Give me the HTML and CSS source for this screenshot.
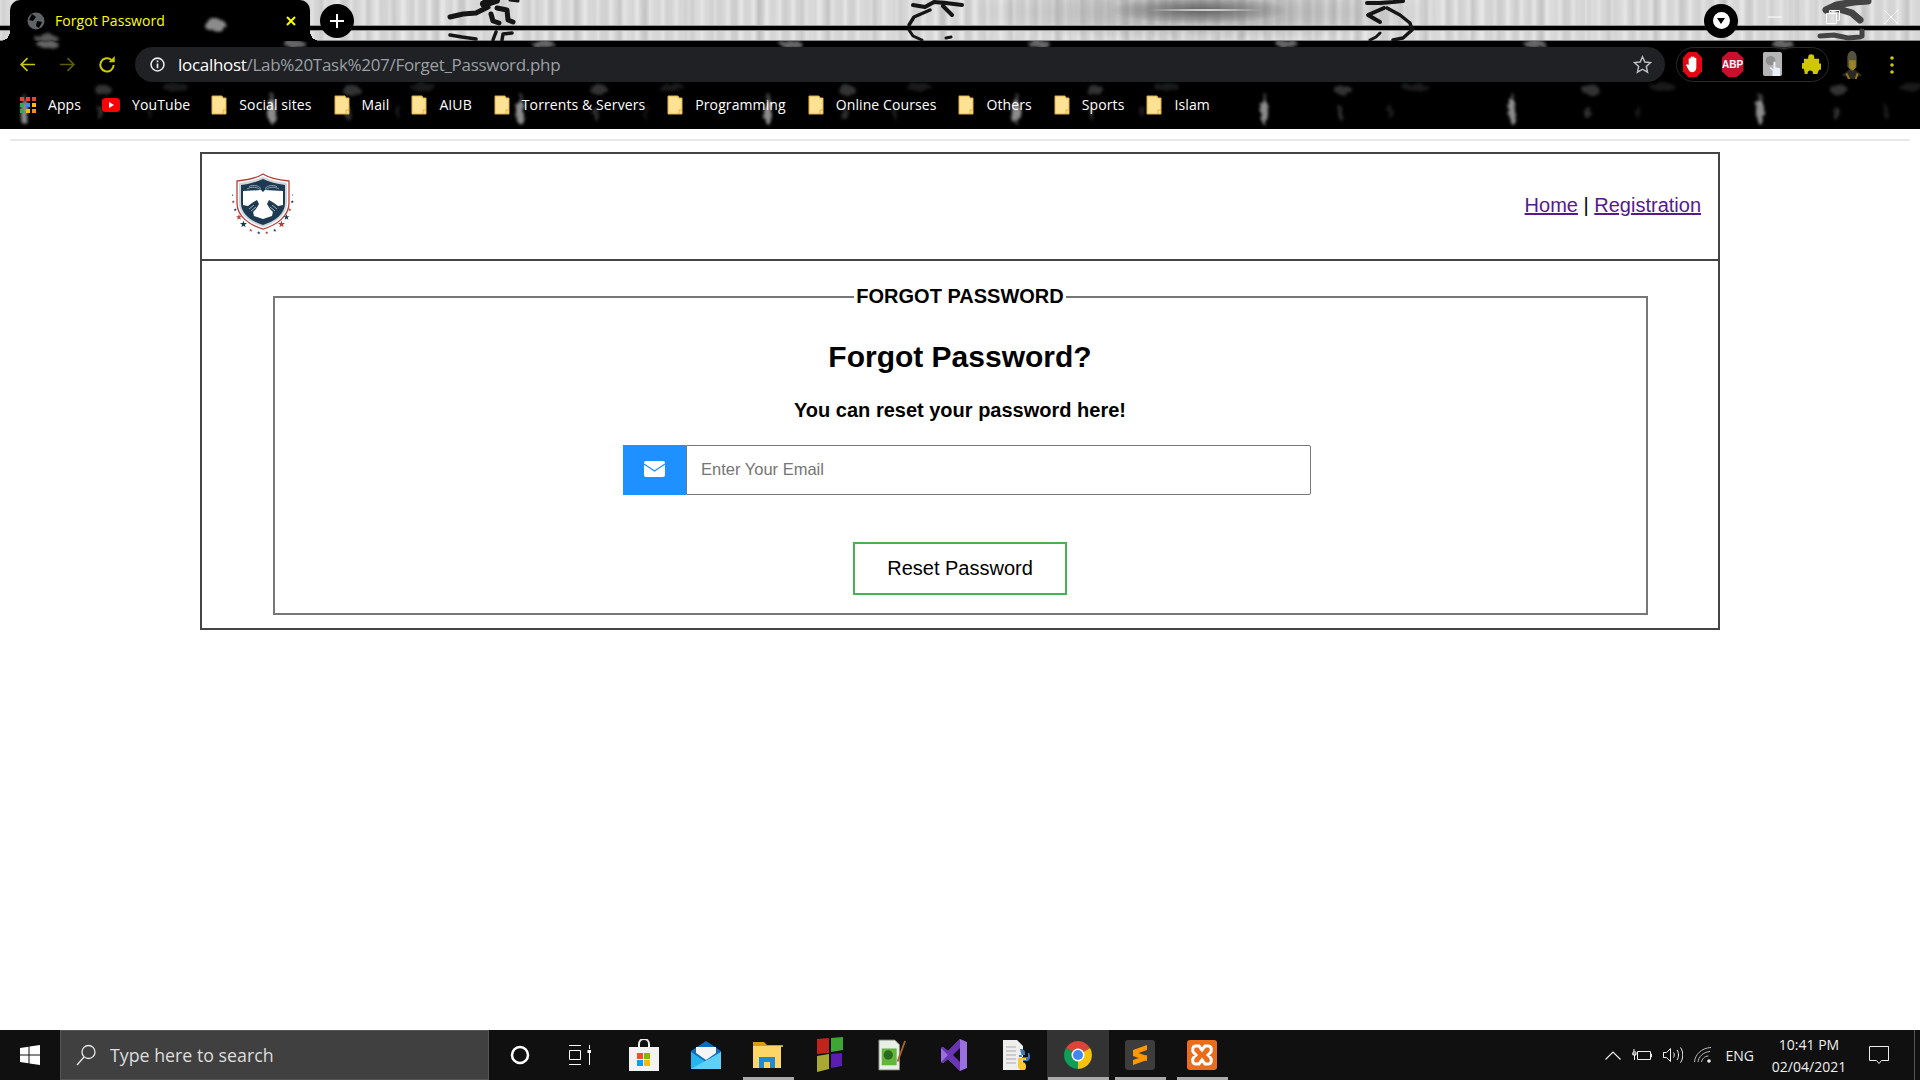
FILE: index.html
```html
<!DOCTYPE html>
<html lang="en">
<head>
    <meta charset="UTF-8">
    <meta name="viewport" content="width=device-width, initial-scale=1.0">
    <title>Forgot Password</title>
    <link rel="stylesheet" href="styles.css">
</head>
<body>
    <svg class="defs" aria-hidden="true">
        <defs>
            <filter id="wisp" x="-20%" y="-20%" width="140%" height="140%">
                <feTurbulence type="fractalNoise" baseFrequency="0.12" numOctaves="2" seed="4"/>
                <feDisplacementMap in="SourceGraphic" scale="7"/>
                <feGaussianBlur stdDeviation="1.600"/>
            </filter>
            <pattern id="smoke-tile" width="248" height="129" patternUnits="userSpaceOnUse">
                <g fill="#fff">
                    <ellipse cx="24" cy="112" rx="4" ry="12" opacity=".55"/>
                    <ellipse cx="24" cy="98" rx="2" ry="5" opacity=".25"/>
                    <ellipse cx="47" cy="44" rx="11" ry="4" opacity=".4"/>
                    <ellipse cx="103" cy="90" rx="9" ry="5" opacity=".2"/>
                    <ellipse cx="100" cy="113" rx="3" ry="7" opacity=".18"/>
                    <ellipse cx="175" cy="87" rx="13" ry="4" opacity=".1"/>
                    <ellipse cx="150" cy="112" rx="2" ry="7" opacity=".1"/>
                </g>
            </pattern>
        </defs>
        <symbol id="folder" viewBox="0 0 16 20">
            <path d="M1 1h10l1 2h3v16H1z" fill="#fde293" stroke="#e0b040"/>
            <path d="M12 19v-4h3" fill="none" stroke="#e0b040"/>
        </symbol>
        <symbol id="star" viewBox="0 0 10 10">
            <polygon points="5,0 6.2,3.6 10,3.6 7,5.9 8.1,9.6 5,7.4 1.9,9.6 3,5.9 0,3.6 3.8,3.6"/>
        </symbol>
    </svg>

    <!-- browser window -->
    <header class="chrome">
        <svg class="smoke" viewBox="0 0 1920 129" aria-hidden="true">
            <rect x="-20" y="0" width="1960" height="129" fill="url(#smoke-tile)" filter="url(#wisp)"/>
        </svg>
        <div class="tabstrip">
            <!-- theme picture behind the tabs -->
            <svg class="theme-art" viewBox="0 0 1920 41" aria-hidden="true">
                <g fill="none" stroke="#151515" stroke-linecap="round" stroke-linejoin="round">
                    <path d="M450 17l13-3 13-1 12-6" stroke-width="5"/>
                    <path d="M484 4l12-4" stroke-width="8"/>
                    <path d="M497 8l10 2 1 10 5 2M491 14l2 7 6 2" stroke-width="5"/>
                    <path d="M510 0l8 1" stroke-width="3"/>
                    <path d="M450 35l12 2 14 2M496 32l-3 8M512 33l-9 1-1 6" stroke-width="3.500"/>

                    <path d="M913 5l12 2 9-5 12 1 16 2M943 6l9 9" stroke-width="4"/>
                    <path d="M930 10l-16 7-5 8" stroke-width="3.500"/>
                    <path d="M909 30l4 6 9 4M946 38l5-1" stroke-width="3"/>

                    <path d="M1367 3h13l13-1 10-1" stroke-width="4"/>
                    <path d="M1384 8l-16 7 12 7" stroke-width="4"/>
                    <path d="M1387 8l13 7 10 8 2 7-9 8-10 2" stroke-width="3.500"/>
                    <path d="M1380 33l-4 4-6 3" stroke-width="3"/>
                </g>
                <g fill="none" stroke="#444" stroke-linecap="round" stroke-width="7">
                    <path d="M1826 10l10-5 18-3 14-1M1836 8l16 5 8 7"/>
                    <path d="M1820 36l14-1 14 3 12-1M1862 31v5" stroke-width="5"/>
                </g>
            </svg>
            <div class="tab">
                <svg class="tab-smoke" viewBox="0 0 300 41" aria-hidden="true">
                    <g fill="#fff" filter="url(#wisp)">
                        <ellipse cx="205" cy="25" rx="11" ry="6" opacity=".55"/>
                        <ellipse cx="36" cy="38" rx="12" ry="4" opacity=".35"/>
                    </g>
                </svg>
                <svg class="tab-globe" viewBox="0 0 18 18">
                    <circle cx="9" cy="9" r="8.500" fill="#5f6368"/>
                    <path d="M5 2l4 3-3 4-4-1zM10 9l5 1-3 6-3-2z" fill="#000"/>
                </svg>
                <span class="tab-title">Forgot Password</span>
                <svg class="tab-close" viewBox="0 0 10 10">
                    <path d="M1 1l8 8M9 1l-8 8" stroke="#ffff00" stroke-width="2"/>
                </svg>
            </div>
            <div class="new-tab">
                <svg viewBox="0 0 14 14" width="14" height="14">
                    <path d="M7 0v14M0 7h14" stroke="#fff" stroke-width="2"/>
                </svg>
            </div>
            <div class="tab-search">
                <div class="tab-search-dot">
                    <svg viewBox="0 0 8 6" width="8" height="6"><path d="M0 0h8L4 6z" fill="#000"/></svg>
                </div>
            </div>
            <div class="win-btn">
                <svg viewBox="0 0 14 2" width="14" height="2"><path d="M0 1h14" stroke="#fff"/></svg>
            </div>
            <div class="win-btn">
                <svg viewBox="0 0 14 14" width="14" height="14"><path d="M.5 3.500h10v10H.5zM3.500 3.500v-3h10v10h-3" fill="none" stroke="#fff"/></svg>
            </div>
            <div class="win-btn">
                <svg viewBox="0 0 14 14" width="14" height="14"><path d="M0 0l14 14M14 0L0 14" stroke="#fff"/></svg>
            </div>
        </div>

        <div class="toolbar">
            <div class="nav-btn">
                <svg viewBox="0 0 16 16" width="17" height="17"><path d="M15 8H2M8 2L2 8l6 6" fill="none" stroke="#c9c900" stroke-width="1.600"/></svg>
            </div>
            <div class="nav-btn">
                <svg viewBox="0 0 16 16" width="17" height="17"><path d="M1 8h13M8 2l6 6-6 6" fill="none" stroke="#5f5f00" stroke-width="1.600"/></svg>
            </div>
            <div class="nav-btn">
                <svg viewBox="0 0 18 18" width="20" height="20"><path d="M15 9a6 6 0 1 1-2-4.600" fill="none" stroke="#c9c900" stroke-width="1.800"/><path d="M10.500 6.500H16V1z" fill="#c9c900"/></svg>
            </div>
            <div class="omnibox">
                <svg class="info-icon" viewBox="0 0 14 14" width="15" height="15">
                    <circle cx="7" cy="7" r="6" fill="none" stroke="#e8eaed" stroke-width="1.500"/>
                    <path d="M7 6v4.500M7 3.200v1.600" stroke="#e8eaed" stroke-width="1.600"/>
                </svg>
                <span class="url"><span class="url-host">localhost</span>/Lab%20Task%207/Forget_Password.php</span>
                <svg class="star-icon" viewBox="0 0 20 20" width="19" height="19">
                    <path d="M10 1.800l2.500 5.600 6 .6-4.500 4.100 1.300 6L10 15l-5.300 3.100 1.300-6L1.500 8l6-.6z" fill="none" stroke="#bdc1c6" stroke-width="1.500"/>
                </svg>
            </div>
            <div class="ext-pill">
                <svg viewBox="0 0 22 26" width="21" height="25">
                    <path d="M6.500 0h9L21 6v14l-5.500 6h-9L1 20V6z" fill="#e30613"/>
                    <path d="M7 13V7.500a1 1 0 0 1 2 0V12V5.500a1 1 0 0 1 2 0V12V5.500a1 1 0 0 1 2 0V12V7a1 1 0 0 1 2 0v9c0 3-1.500 5-4 5-2.500 0-3.500-1-4.500-3L4.500 14c-.5-1 1-2 2-.5z" fill="#fff"/>
                </svg>
                <div class="abp-icon">ABP</div>
                <svg viewBox="0 0 22 26" width="21" height="25">
                    <rect x="1" y="0" width="20" height="25" rx="2" fill="#b5b5b5"/>
                    <circle cx="9" cy="9" r="5" fill="#8f8f8f"/>
                    <path d="M11 25v-6l-3-2 1-1 3 2V10h2v6l5 1v8z" fill="#e8f0f8"/>
                </svg>
                <svg viewBox="0 0 20 22" width="19" height="21">
                    <path d="M6.500 5V3.500a3.200 3.200 0 0 1 6.400 0V5H18v5h1.200a3.200 3.200 0 0 1 0 6.400H18L16 21h-4.500v-1a2.800 2.800 0 0 0-5.600 0v1H3l-1-5.500H1a3 3 0 0 1 0-6h1V5z" fill="#cfc800"/>
                </svg>
            </div>
            <svg class="avatar" viewBox="0 0 28 32" width="26" height="32">
                <path d="M3 27l8-6h6l8 6-5 2-2 2H9l-1-2z" fill="#2b2a20"/>
                <path d="M9 8c0-5 3-7 5-7s5 2 5 7v10l-5 5-5-5z" fill="#55523f"/>
                <path d="M11 11h7v8l-3 3-4-3z" fill="#9c8424"/>
                <path d="M8 25l3 6M20 25l-2 6" stroke="#9c7424" stroke-width="2"/>
            </svg>
            <svg class="kebab" viewBox="0 0 4 18" width="4" height="18">
                <circle cx="2" cy="2" r="1.800" fill="#cfc800"/>
                <circle cx="2" cy="9" r="1.800" fill="#cfc800"/>
                <circle cx="2" cy="16" r="1.800" fill="#cfc800"/>
            </svg>
        </div>

        <nav class="bookmarks">
            <a class="mark">
                <svg viewBox="0 0 16 16" width="16" height="16">
                    <rect x="0" y="0" width="4" height="4" fill="#ea4335"/><rect x="6" y="0" width="4" height="4" fill="#ea4335"/><rect x="12" y="0" width="4" height="4" fill="#ea4335"/>
                    <rect x="0" y="6" width="4" height="4" fill="#34a853"/><rect x="6" y="6" width="4" height="4" fill="#4285f4"/><rect x="12" y="6" width="4" height="4" fill="#fbbc04"/>
                    <rect x="0" y="12" width="4" height="4" fill="#34a853"/><rect x="6" y="12" width="4" height="4" fill="#fbbc04"/><rect x="12" y="12" width="4" height="4" fill="#f28b20"/>
                </svg>
                Apps
            </a>
            <a class="mark mark-video">
                <svg viewBox="0 0 18 14" width="18" height="14">
                    <rect width="18" height="14" rx="3.500" fill="#f00"/>
                    <path d="M7 4l5 3-5 3z" fill="#fff"/>
                </svg>
                YouTube
            </a>
            <a class="mark"><svg class="folder-icon"><use href="#folder"/></svg>Social sites</a>
            <a class="mark"><svg class="folder-icon"><use href="#folder"/></svg>Mail</a>
            <a class="mark"><svg class="folder-icon"><use href="#folder"/></svg>AIUB</a>
            <a class="mark"><svg class="folder-icon"><use href="#folder"/></svg>Torrents &amp; Servers</a>
            <a class="mark"><svg class="folder-icon"><use href="#folder"/></svg>Programming</a>
            <a class="mark"><svg class="folder-icon"><use href="#folder"/></svg>Online Courses</a>
            <a class="mark"><svg class="folder-icon"><use href="#folder"/></svg>Others</a>
            <a class="mark"><svg class="folder-icon"><use href="#folder"/></svg>Sports</a>
            <a class="mark"><svg class="folder-icon"><use href="#folder"/></svg>Islam</a>
        </nav>
    </header>

    <!-- the php page -->
    <main class="page">
        <hr class="top-rule">
        <div class="box">
            <div class="box-head">
                <svg class="logo" viewBox="0 0 64 64" width="64" height="64">
                    <path d="M32 1C38 5 48 7 58 8V30C58 43 46 52 32 56C18 52 6 43 6 30V8C16 7 26 5 32 1Z" fill="#fff" stroke="#b5403a" stroke-width="1.300"/>
                    <path d="M32 3.500C38 7 47 9 56 10V30C56 42 45 50 32 54C19 50 8 42 8 30V10C17 9 26 7 32 3.500Z" fill="#cfd5d9"/>
                    <path d="M32 6C38 9 46 11 54 12V30C54 41 44 48 32 52C20 48 10 41 10 30V12C18 11 26 9 32 6Z" fill="#1d3a52"/>
                    <path d="M12 18L30 17L32 19L34 17L52 18V32L43 34L41 43L32 46L23 43L21 34L12 32Z" fill="#fff"/>
                    <path d="M16 16c5-3 11-2 15 2M48 16c-5-3-11-2-15 2M18 13.500c5-2 9-1 12 2M46 13.500c-5-2-9-1-12 2" fill="none" stroke="#a9b8c2" stroke-width=".800"/>
                    <path d="M13 36l8-6 5-3 2 4-3 5-5 5zM51 36l-8-6-5-3-2 4 3 5 5 5z" fill="#1d3a52"/>
                    <path d="M18 36l5-4M20 38l5-4M46 36l-5-4M44 38l-5-4" stroke="#fff" stroke-width=".600"/>
                    <g fill="#b5403a">
                        <use href="#star" x="5" y="41" width="6" height="6"/>
                        <use href="#star" x="47" y="47.500" width="7" height="7"/>
                        <use href="#star" x=".5" y="27" width="3.500" height="3.500"/>
                        <use href="#star" x="57" y="35" width="3.500" height="3.500"/>
                        <use href="#star" x="18" y="55.500" width="3.500" height="3.500"/>
                        <use href="#star" x="34" y="58" width="3.500" height="3.500"/>
                        <use href="#star" x="60.500" y="21" width="2" height="2"/>
                    </g>
                    <g fill="#1d3a52">
                        <use href="#star" x="9" y="47.500" width="7" height="7"/>
                        <use href="#star" x="52.500" y="41" width="6" height="6"/>
                        <use href="#star" x="2.500" y="35" width="3.500" height="3.500"/>
                        <use href="#star" x="59.500" y="27" width="3.500" height="3.500"/>
                        <use href="#star" x="26" y="58" width="3.500" height="3.500"/>
                        <use href="#star" x="42" y="55.500" width="3.500" height="3.500"/>
                        <use href="#star" x=".5" y="21" width="2" height="2"/>
                    </g>
                </svg>
                <div class="head-links">
                    <a href="#" class="head-link">Home</a> | <a href="#" class="head-link">Registration</a>
                </div>
            </div>
            <div class="box-body">
                <fieldset class="reset-set">
                    <legend class="reset-legend">FORGOT PASSWORD</legend>
                    <h2 class="reset-title">Forgot Password?</h2>
                    <h4 class="reset-sub">You can reset your password here!</h4>
                    <div class="input-group">
                        <div class="input-icon">
                            <svg viewBox="0 0 21 16" width="21" height="16">
                                <rect width="21" height="16" rx="2" fill="#fff"/>
                                <path d="M0 3l10.500 7L21 3" fill="none" stroke="#1e90ff" stroke-width="1.200"/>
                            </svg>
                        </div>
                        <input class="email-input" type="email" placeholder="Enter Your Email">
                    </div>
                    <button class="reset-btn" type="button">Reset Password</button>
                </fieldset>
            </div>
        </div>
    </main>

    <!-- windows taskbar -->
    <footer class="taskbar">
        <div class="start-btn">
            <svg viewBox="0 0 20 20" width="20" height="20">
                <path d="M0 3l8.500-1.200V9.500H0zM9.500 1.600L20 0v9.500H9.500zM0 10.500h8.500v7.700L0 17zM9.500 10.500H20V20L9.500 18.400z" fill="#fff"/>
            </svg>
        </div>
        <div class="search-box">
            <svg viewBox="0 0 20 22" width="20" height="22">
                <circle cx="12.500" cy="8" r="6.500" fill="none" stroke="#e6e6e6" stroke-width="1.300"/>
                <path d="M8 13l-7 8" stroke="#e6e6e6" stroke-width="1.300"/>
            </svg>
            <span>Type here to search</span>
        </div>
        <div class="task-btn">
            <svg viewBox="0 0 20 20" width="20" height="20"><circle cx="10" cy="10" r="8" fill="none" stroke="#fff" stroke-width="2.500"/></svg>
        </div>
        <div class="task-btn task-view">
            <svg viewBox="0 0 22 20" width="22" height="20">
                <path d="M0 .5h12M.5 5.500h11v9H.5zM0 19.500h12M20.500 0v4M20.500 8v12" fill="none" stroke="#fff"/>
                <rect x="18.500" y="5" width="4" height="3" fill="#fff"/>
            </svg>
        </div>
        <div class="task-btn">
            <svg viewBox="0 0 30 32" width="30" height="32">
                <path d="M10 9V5a5 5 0 0 1 10 0v4" fill="none" stroke="#eee" stroke-width="2"/>
                <rect x="0" y="8" width="30" height="24" fill="#f3f3f3"/>
                <rect x="8" y="14" width="6" height="6" fill="#f25022"/><rect x="15" y="14" width="6" height="6" fill="#7fba00"/>
                <rect x="8" y="21" width="6" height="6" fill="#00a4ef"/><rect x="15" y="21" width="6" height="6" fill="#ffb900"/>
            </svg>
        </div>
        <div class="task-btn">
            <svg viewBox="0 0 30 28" width="30" height="28">
                <path d="M15 0l15 10v18H0V10z" fill="#0f6cbd"/>
                <path d="M5 6h20v6l-10 7-10-7z" fill="#f5f5f5"/>
                <path d="M0 11l15 10 15-10v17H0z" fill="#28b4ee"/>
                <path d="M30 11v17H0z" fill="#5fd0f7"/>
            </svg>
        </div>
        <div class="task-btn task-open">
            <svg viewBox="0 0 30 26" width="30" height="26">
                <path d="M0 0h11l3 3h16v2H0z" fill="#d99c10"/>
                <rect x="0" y="4" width="28" height="22" fill="#fcd667"/>
                <path d="M6 26V15h16v11h-5v-6h-6v6z" fill="#1f8ad8"/>
            </svg>
        </div>
        <div class="task-btn">
            <svg viewBox="0 0 28 36" width="28" height="36">
                <path d="M1 2l12-1v15l-12 1z" fill="#c0241c"/>
                <path d="M15 1l12-1v13l-12 2z" fill="#3fa535"/>
                <path d="M1 19l12-2v15l-12 3z" fill="#a9a832"/>
                <path d="M15 17l11-1v13l-11 2z" fill="#5a1fb0"/>
            </svg>
        </div>
        <div class="task-btn">
            <svg viewBox="0 0 30 34" width="28" height="32">
                <path d="M1 1h17l5 5v27H1z" fill="#e8efe4" stroke="#888"/>
                <rect x="4" y="10" width="16" height="18" fill="#62b63c"/>
                <circle cx="11" cy="17" r="5" fill="#2c6a1e"/>
                <path d="M21 24L29 2" stroke="#a8641e" stroke-width="2"/>
            </svg>
        </div>
        <div class="task-btn">
            <svg viewBox="0 0 26 32" width="26" height="32">
                <path d="M19 0l7 3v26l-7 3-12-12-5 4-2-1V9l2-1 5 4z" fill="#9a6fe0"/>
                <path d="M19 0v32L7 20l-5 4-2-1 7-7-7-7 2-1 5 4z" fill="#6a35b5"/>
                <path d="M19 9l-7 7 7 7z" fill="#111"/>
            </svg>
        </div>
        <div class="task-btn">
            <svg viewBox="0 0 28 30" width="28" height="30">
                <path d="M1 0h14l6 6v24H1z" fill="#eee"/>
                <path d="M4 7h10M4 11h10M4 15h10M4 19h10M4 23h10" stroke="#aaa"/>
                <path d="M18 9c4 0 5 2 5 4v2h-6v2h9v-4c2 0 2 2 2 4s-1 4-3 4h-4z" fill="#3d7ab8"/>
                <path d="M21 30c-4 0-5-2-5-4v-8h8v2h-4v2c0 0 4 0 4 4s-1 4-3 4z" fill="#fcc834"/>
            </svg>
        </div>
        <div class="task-btn task-active task-open">
            <svg viewBox="0 0 30 30" width="30" height="30">
                <path d="M15 15L2.900 8A14 14 0 0 1 27.100 8z" fill="#db4437"/>
                <path d="M15 15L27.100 8A14 14 0 0 1 15 29z" fill="#f4c20d"/>
                <path d="M15 15L15 29A14 14 0 0 1 2.900 8z" fill="#0f9d58"/>
                <circle cx="15" cy="15" r="6.500" fill="#fff"/>
                <circle cx="15" cy="15" r="5" fill="#4285f4"/>
            </svg>
        </div>
        <div class="task-btn task-open">
            <svg viewBox="0 0 30 30" width="30" height="30">
                <rect width="30" height="30" rx="3" fill="#3d3d3d"/>
                <path d="M8 10l14-5v5L8 15zM8 11l14 5v5L8 16zM8 20l14-5v5L8 25z" fill="#ff9800"/>
            </svg>
        </div>
        <div class="task-btn task-open">
            <svg viewBox="0 0 30 30" width="30" height="30">
                <rect width="30" height="30" rx="3" fill="#ea6d1c"/>
                <path d="M9 6h3l3 4 3-4h3c4 0 4 5 2 7l-2 2 2 2c2 2 2 7-2 7h-3l-3-4-3 4H9c-4 0-4-5-2-7l2-2-2-2c-2-2-2-7 2-7z" fill="none" stroke="#fff" stroke-width="3"/>
            </svg>
        </div>
        <div class="tray">
            <svg viewBox="0 0 16 9" width="16" height="9"><path d="M.5 8.500L8 1l7.500 7.500" fill="none" stroke="#eee" stroke-width="1.200"/></svg>
            <svg viewBox="0 0 20 12" width="20" height="12"><path d="M5.500 2.500h13v8h-13zM18.500 5h1v3h-1M0 5h4M2 0v3M1 3h3v3H1zM2.500 6v5" fill="none" stroke="#eee"/></svg>
            <svg viewBox="0 0 20 16" width="20" height="16"><path d="M.5 5.500h3l4-4v13l-4-4h-3zM10.500 5.500c1 1.500 1 3.500 0 5M14 3c2 3 2 7 0 10M17.500.5c3 4 3 11 0 15" fill="none" stroke="#eee"/></svg>
            <svg viewBox="0 0 18 16" width="18" height="16"><path d="M.5 15C1 8 7 1 17 .5M4 15c.5-5 5-10 12-10.500M7.500 15c.5-3 3-6 7-6" fill="none" stroke="#bbb"/><circle cx="15" cy="14" r="1.800" fill="#eee"/></svg>
            <span class="tray-lang">ENG</span>
            <div class="tray-clock">
                <span>10:41 PM</span>
                <span>02/04/2021</span>
            </div>
            <svg class="tray-note" viewBox="0 0 20 19" width="20" height="19"><path d="M.5.500h19v14h-7l-2.500 3-2.500-3h-7z" fill="none" stroke="#eee"/></svg>
            <div class="tray-peek"></div>
        </div>
    </footer>
</body>
</html>
```

FILE: styles.css
```css
html, body {
    height: 100%;
}
body {
    margin: 0;
    display: flex;
    flex-direction: column;
    height: 1080px;
    overflow: hidden;
    background-color: #fff;
    font-family: "Liberation Sans", Arial, sans-serif;
}
.defs {
    position: absolute;
    width: 0;
    height: 0;
}

/* browser window */
.chrome {
    position: relative;
    flex: none;
    height: 129px;
    font-family: "Open Sans", "Noto Sans", sans-serif;
    color: #fff;
    background-color: #000;
}
.smoke {
    position: absolute;
    left: 0;
    top: 0;
    width: 1920px;
    height: 129px;
}
.tabstrip {
    position: relative;
    display: flex;
    align-items: center;
    height: 41px;
    background-color: #cdcdcd;
    background-image:
        linear-gradient(#000, #000),
        linear-gradient(#999, #999),
        linear-gradient(#888, #888),
        radial-gradient(ellipse 60px 1.5px at 1205px 10px, #fff, transparent),
        radial-gradient(ellipse 90px 14px at 1200px 10px, rgba(90,90,90,.85), transparent),
        radial-gradient(ellipse 230px 30px at 1200px 12px, rgba(120,120,120,.55), transparent),
        repeating-radial-gradient(circle at 1200px 10px, rgba(255,255,255,.16), rgba(255,255,255,0) 7px, rgba(255,255,255,.16) 14px),
        repeating-linear-gradient(90deg, rgba(255,255,255,.38), rgba(255,255,255,0) 4px, rgba(255,255,255,0) 9px, rgba(255,255,255,.38) 13px),
        repeating-linear-gradient(90deg, rgba(0,0,0,.07), rgba(0,0,0,0) 6px, rgba(0,0,0,0) 17px, rgba(0,0,0,.07) 23px),
        repeating-linear-gradient(90deg, rgba(255,255,255,.2), rgba(255,255,255,.02) 19px, rgba(255,255,255,.2) 37px);
    background-size: 100% 4px, 100% 6px, 100% 1px, auto, auto, auto, auto, auto, auto, auto;
    background-position: 0 26px, 0 25px, 0 40px, 0 0, 0 0, 0 0, 0 0, 0 0, 0 0, 0 0;
    background-repeat: no-repeat, no-repeat, no-repeat, no-repeat, no-repeat, no-repeat, repeat, repeat, repeat, repeat;
}
.theme-art {
    position: absolute;
    left: 0;
    top: 0;
    width: 1920px;
    height: 41px;
    filter: blur(.6px);
}
.tab {
    position: relative;
    display: flex;
    align-items: center;
    align-self: flex-end;
    box-sizing: border-box;
    width: 300px;
    height: 41px;
    margin-left: 10px;
    padding: 0 14px 0 17px;
    border-radius: 10px 10px 0 0;
    background-color: #000;
}
.tab::before,
.tab::after {
    content: "";
    position: absolute;
    bottom: 0;
    width: 10px;
    height: 10px;
}
.tab::before {
    left: -10px;
    background: radial-gradient(circle at 0 0, transparent 10px, #000 10px);
}
.tab::after {
    right: -10px;
    background: radial-gradient(circle at 100% 0, transparent 10px, #000 10px);
}
.tab-smoke {
    position: absolute;
    left: 0;
    top: 0;
    width: 300px;
    height: 41px;
}
.tab-globe {
    position: relative;
    width: 18px;
    height: 18px;
    flex: none;
}
.tab-title {
    position: relative;
    margin-left: 10px;
    font-size: 14px;
    letter-spacing: .05px;
    color: #ffff00;
}
.tab-close {
    position: relative;
    width: 10px;
    height: 10px;
    margin-left: auto;
}
.new-tab,
.tab-search {
    position: relative;
    flex: none;
    display: flex;
    align-items: center;
    justify-content: center;
    width: 34px;
    height: 34px;
    border-radius: 50%;
    background-color: #000;
}
.new-tab {
    margin-left: 10px;
}
.tab-search {
    margin-left: auto;
}
.tab-search-dot {
    display: flex;
    align-items: center;
    justify-content: center;
    width: 17px;
    height: 17px;
    border-radius: 50%;
    background-color: #fff;
}
.win-btn {
    position: relative;
    display: flex;
    align-items: center;
    justify-content: center;
    width: 58px;
    height: 34px;
    align-self: flex-start;
}
.tab-search + .win-btn {
    margin-left: 8px;
}

.toolbar {
    position: relative;
    display: flex;
    align-items: center;
    height: 35px;
    margin-top: 6px;
    padding-left: 7px;
}
.nav-btn {
    display: flex;
    align-items: center;
    justify-content: center;
    width: 40px;
    height: 35px;
    flex: none;
}
.omnibox {
    display: flex;
    align-items: center;
    box-sizing: border-box;
    width: 1530px;
    height: 35px;
    margin-left: 8px;
    padding: 0 13px 0 15px;
    border-radius: 18px;
    background-color: #202124;
}
.url {
    margin-left: 13px;
    font-size: 17px;
    letter-spacing: -.3px;
    color: #9aa0a6;
}
.url-host {
    color: #fff;
}
.star-icon {
    margin-left: auto;
}
.ext-pill {
    display: flex;
    align-items: center;
    gap: 18.500px;
    box-sizing: border-box;
    width: 153px;
    height: 35px;
    margin-left: 11px;
    padding-left: 5px;
    border: 1px solid #2a2a2a;
    border-radius: 18px;
}
.abp-icon {
    width: 22px;
    height: 25px;
    line-height: 25px;
    text-align: center;
    font-family: "Liberation Sans", Arial, sans-serif;
    font-size: 10px;
    font-weight: 700;
    color: #fff;
    background-color: #c8102e;
    clip-path: polygon(30% 0, 70% 0, 100% 24%, 100% 76%, 70% 100%, 30% 100%, 0 76%, 0 24%);
}
.avatar {
    margin-left: 10px;
}
.kebab {
    margin-left: 25px;
}

.bookmarks {
    position: relative;
    display: flex;
    align-items: center;
    gap: 22px;
    box-sizing: border-box;
    height: 47px;
    padding: 0 0 2px 20px;
    font-size: 14px;
    letter-spacing: .1px;
}
.mark {
    display: flex;
    align-items: center;
    gap: 12px;
}
.mark-video {
    margin: 0 -1px;
}
.folder-icon {
    width: 16px;
    height: 20px;
}

/* the php page */
.page {
    flex: 1;
}
.top-rule {
    height: 2px;
    margin: 10px 10px 0;
    border: none;
    background-color: #e8e8e8;
}
.box {
    box-sizing: border-box;
    width: 1520px;
    height: 478px;
    margin: 11px auto 0;
    border: 2px solid #444;
}
.box-head {
    display: flex;
    align-items: center;
    justify-content: space-between;
    box-sizing: border-box;
    height: 107px;
    padding: 0 17px 0 29px;
    border-bottom: 2px solid #444;
    font-size: 20px;
}
.logo {
    margin-top: -3px;
}
.head-links {
    margin-bottom: 2px;
}
.head-link {
    color: #551a8b;
}
.box-body {
    padding: 24px 70px 0 71px;
}
.reset-set {
    margin: 0;
    padding: 0 1px 18px 0;
    border: 2px solid #777;
}
.reset-legend {
    margin: 0 auto;
    padding: 0 2px;
    font-size: 20px;
    font-weight: 700;
    color: #000;
}
.reset-title {
    margin: 32px 0 0;
    text-align: center;
    font-size: 30px;
}
.reset-sub {
    margin: 25px 0 0;
    text-align: center;
    font-size: 20px;
}
.input-group {
    display: flex;
    width: 688px;
    height: 50px;
    margin: 23px 0 0 348px;
}
.input-icon {
    display: flex;
    align-items: center;
    justify-content: center;
    flex: none;
    width: 63px;
    padding-bottom: 2px;
    background-color: #1e90ff;
}
.email-input {
    flex: 1;
    box-sizing: border-box;
    padding: 0 14px 2px;
    border: 1px solid #777;
    border-radius: 0 2px 2px 0;
    font-family: "Liberation Sans", Arial, sans-serif;
    font-size: 16.500px;
}
.email-input::placeholder {
    color: #757575;
}
.reset-btn {
    display: block;
    width: 214px;
    height: 53px;
    margin: 47px auto 0;
    border: 2px solid #4caf50;
    background-color: #fff;
    font-family: "Liberation Sans", Arial, sans-serif;
    font-size: 20px;
    color: #000;
}

/* windows taskbar */
.taskbar {
    display: flex;
    align-items: center;
    flex: none;
    height: 50px;
    background-color: #101010;
}
.start-btn {
    display: flex;
    align-items: center;
    justify-content: center;
    width: 60px;
    height: 50px;
}
.search-box {
    display: flex;
    align-items: center;
    box-sizing: border-box;
    width: 429px;
    height: 50px;
    padding-left: 15px;
    border: 1px solid #555;
    background-color: #404040;
    font-family: "Open Sans", "Noto Sans", sans-serif;
    font-size: 17.800px;
    color: #ddd;
}
.search-box span {
    margin-left: 14px;
}
.task-btn {
    display: flex;
    align-items: center;
    justify-content: center;
    box-sizing: border-box;
    width: 62px;
    height: 50px;
    padding-bottom: 1px;
}
.task-view {
    padding-right: 4px;
}
.task-open {
    background-image: linear-gradient(#aaa, #aaa);
    background-repeat: no-repeat;
    background-size: 51px 3px;
    background-position: center bottom;
}
.task-active {
    background-color: #333;
    background-size: 61px 3px;
}
.tray {
    display: flex;
    align-items: center;
    justify-content: flex-end;
    flex: 1;
    height: 50px;
    padding-right: 5px;
    gap: 11px;
    color: #eee;
    font-family: "Open Sans", "Noto Sans", sans-serif;
    font-size: 14px;
}
.tray-lang {
    margin-left: 3px;
}
.tray-clock {
    display: flex;
    flex-direction: column;
    align-items: center;
    gap: 3px;
    width: 76px;
    margin-left: 6px;
}
.tray-note {
    margin-left: 11px;
}
.tray-peek {
    width: 1px;
    height: 50px;
    margin-left: 14px;
    background-color: #555;
}
```
